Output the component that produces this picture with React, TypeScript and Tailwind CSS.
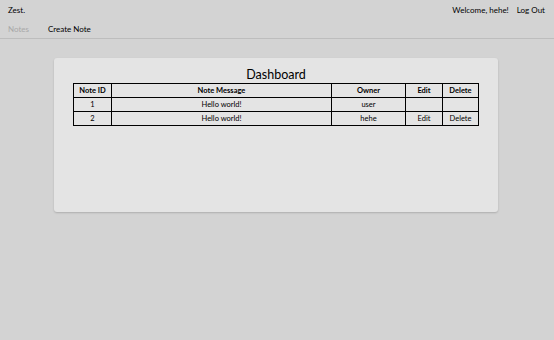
import React from "react";

const notes = [
    { id: 1, message: "Hello world!", owner: "user", mine: false },
    { id: 2, message: "Hello world!", owner: "hehe", mine: true },
];

export default function App() {
    return (
        <div
            className="min-h-[340px] w-full bg-[#d3d3d3] text-black"
            style={{ fontFamily: 'Lato, "Open Sans", sans-serif' }}
        >
            <nav className="border-b border-[#bdbdbd]">
                <div className="flex h-[20px] items-center justify-between pl-[8px] pr-[9px] text-[8px]">
                    <span>Zest.</span>
                    <div className="flex items-center gap-[8px]">
                        <span>Welcome, hehe!</span>
                        <span>Log Out</span>
                    </div>
                </div>
                <div className="flex h-[18px] items-center gap-[19px] pl-[8px] text-[8px]">
                    <span className="text-[#a8a8a8]">Notes</span>
                    <span>Create Note</span>
                </div>
            </nav>

            <main className="pt-[19px]">
                <div className="ml-[54px] h-[154px] w-[444px] rounded-[3px] bg-[#e4e4e4] px-[19px] pt-[9px] shadow-[0_1px_2px_rgba(0,0,0,0.18)]">
                    <h1 className="text-center text-[12.5px] leading-[16px]">Dashboard</h1>
                    <table className="w-full border-collapse border border-black text-[7.5px]">
                        <thead>
                            <tr className="h-[14px]">
                                <th className="w-[38px] border border-black font-bold">Note ID</th>
                                <th className="border border-black font-bold">Note Message</th>
                                <th className="w-[74px] border border-black font-bold">Owner</th>
                                <th className="w-[37px] border border-black font-bold">Edit</th>
                                <th className="w-[36px] border border-black font-bold">Delete</th>
                            </tr>
                        </thead>
                        <tbody>
                            {notes.map((n) => (
                                <tr key={n.id} className="h-[14px] text-center">
                                    <td className="border border-black">{n.id}</td>
                                    <td className="border border-black">{n.message}</td>
                                    <td className="border border-black">{n.owner}</td>
                                    <td className="border border-black">{n.mine ? "Edit" : ""}</td>
                                    <td className="border border-black">{n.mine ? "Delete" : ""}</td>
                                </tr>
                            ))}
                        </tbody>
                    </table>
                </div>
            </main>
        </div>
    );
}
